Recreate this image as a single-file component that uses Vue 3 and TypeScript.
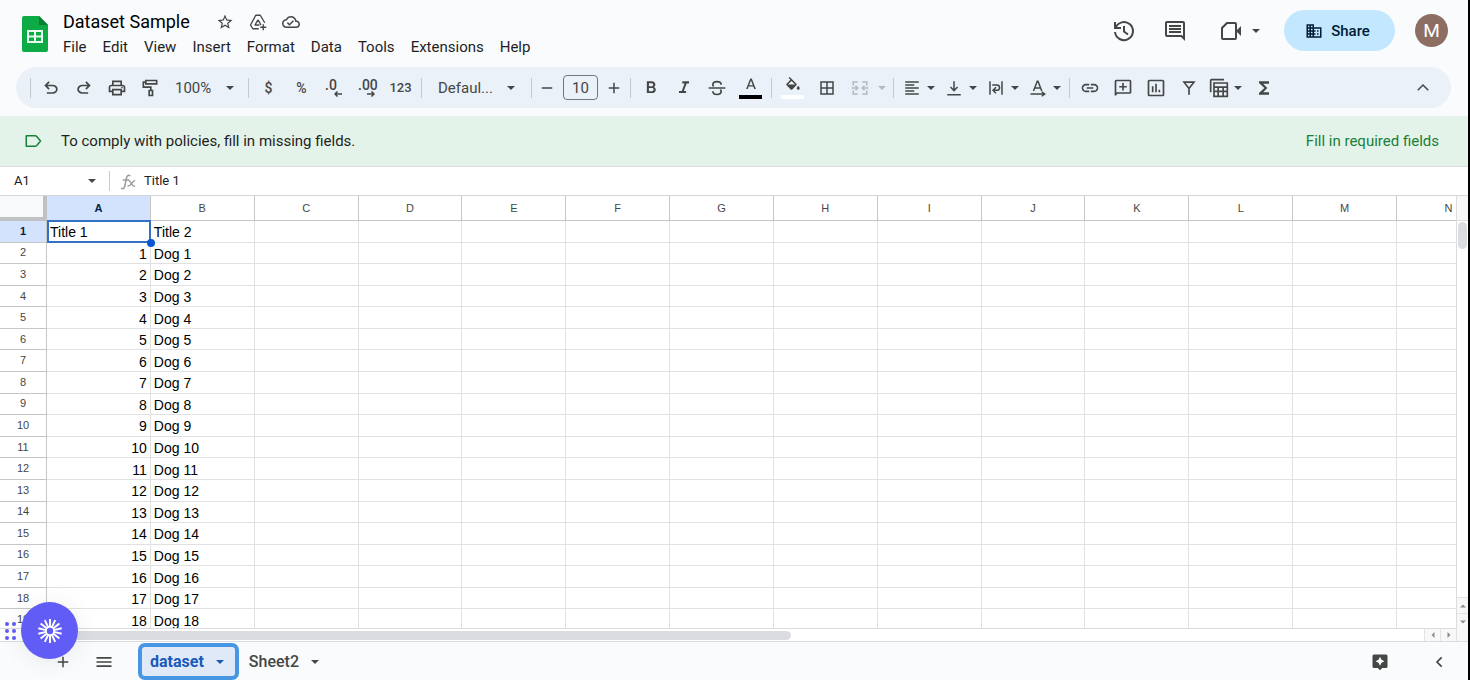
<script setup lang="ts">
import { ref } from 'vue'

interface Tool {
  icon: string
  label: string
  menu?: boolean
}

const title = ref('Dataset Sample')
const cellName = ref('A1')
const formula = ref('Title 1')
const fontSize = ref('10')

const menus = ['File', 'Edit', 'View', 'Insert', 'Format', 'Data', 'Tools', 'Extensions', 'Help']

const historyTools: Tool[] = [
  { icon: 'undo', label: 'Undo' },
  { icon: 'redo', label: 'Redo' },
  { icon: 'print', label: 'Print' },
  { icon: 'paint', label: 'Paint format' },
]
const alignTools: Tool[] = [
  { icon: 'align', label: 'Horizontal align', menu: true },
  { icon: 'valign', label: 'Vertical align', menu: true },
  { icon: 'wrap', label: 'Text wrapping', menu: true },
  { icon: 'rotate', label: 'Text rotation', menu: true },
]
const insertTools: Tool[] = [
  { icon: 'link', label: 'Insert link' },
  { icon: 'addcomment', label: 'Insert comment' },
  { icon: 'chart', label: 'Insert chart' },
  { icon: 'filter', label: 'Create a filter' },
  { icon: 'tables', label: 'Table views', menu: true },
  { icon: 'sigma', label: 'Functions' },
]

const columns = 'ABCDEFGHIJKLMN'.split('')
const rows: string[][] = [['Title 1', 'Title 2']]
for (let n = 1; n <= 18; n++) rows.push([String(n), `Dog ${n}`])
</script>

<template>
  <svg class="defs" aria-hidden="true">
    <symbol id="undo" viewBox="0 -960 960 960"><path d="M280-200v-80h284q63 0 109.5-40T720-420q0-60-46.5-100T564-560H312l104 104-56 56-200-200 200-200 56 56-104 104h252q97 0 169.5 63T800-420q0 94-72.5 157T564-200H280Z" /></symbol>
    <symbol id="redo" viewBox="0 -960 960 960"><path d="M396-200q-97 0-169.500-63T154-420q0-94 72.500-157T396-640h252L544-744l56-56 200 200-200 200-56-56 104-104H396q-63 0-109.500 40T240-420q0 60 46.500 100T396-280h284v80H396Z" /></symbol>
    <symbol id="print" viewBox="0 0 24 24"><path d="M19 8h-1V3H6v5H5c-1.660 0-3 1.340-3 3v6h4v4h12v-4h4v-6c0-1.660-1.340-3-3-3zM8 5h8v3H8V5zm8 14H8v-4h8v4zm2-4v-2H6v2H4v-4c0-.55.45-1 1-1h14c.55 0 1 .45 1 1v4h-2z" /><circle cx="18" cy="11.500" r="1" /></symbol>
    <symbol id="paint" viewBox="0 0 24 24"><g fill="none" stroke="currentColor" stroke-width="2"><path d="M7 3h13v4H7zM7 5H4v6h9v4" /><path d="M11 15h4v6h-4z" /></g></symbol>
    <symbol id="borders" viewBox="0 0 24 24"><path d="M3 3v18h18V3H3zm8 16H5v-6h6v6zm0-8H5V5h6v6zm8 8h-6v-6h6v6zm0-8h-6V5h6v6z" /></symbol>
    <symbol id="merge" viewBox="0 0 24 24"><g fill="none" stroke="currentColor" stroke-width="2"><path d="M9 4H3v5M3 15v5h6M15 4h6v5M21 15v5h-6M1 12h8M23 12h-8M6 9l3 3-3 3M18 9l-3 3 3 3" /></g></symbol>
    <symbol id="align" viewBox="0 0 24 24"><path d="M15 15H3v2h12v-2zm0-8H3v2h12V7zM3 13h18v-2H3v2zm0 8h18v-2H3v2zM3 3v2h18V3H3z" /></symbol>
    <symbol id="valign" viewBox="0 0 24 24"><path d="M11 3h2v10l3-3 1.400 1.400L12 17l-5.400-5.600L8 10l3 3zM3 20v2h18v-2z" /></symbol>
    <symbol id="wrap" viewBox="0 0 24 24"><g fill="none" stroke="currentColor" stroke-width="2"><path d="M4 3v18M20 3v18M7 8h6c5 0 5 7 0 7h-4M12 11l-4 4 4 4" /></g></symbol>
    <symbol id="rotate" viewBox="0 0 24 24"><g fill="none" stroke="currentColor" stroke-width="2"><path d="M6 16l5-13h1l5 13M8 12h7M2 20h18M17 17l4 3-4 3" /></g></symbol>
    <symbol id="link" viewBox="0 0 24 24"><path d="M3.900 12c0-1.710 1.390-3.100 3.100-3.100h4V7H7c-2.760 0-5 2.240-5 5s2.240 5 5 5h4v-1.900H7c-1.710 0-3.100-1.390-3.100-3.100zM8 13h8v-2H8v2zm9-6h-4v1.900h4c1.710 0 3.100 1.390 3.100 3.100s-1.390 3.100-3.100 3.100h-4V17h4c2.760 0 5-2.240 5-5s-2.240-5-5-5z" /></symbol>
    <symbol id="addcomment" viewBox="0 0 24 24"><g fill="none" stroke="currentColor" stroke-width="2"><path d="M3 21V4q0-1 1-1h16q1 0 1 1v13q0 1-1 1H5l-2 2M12 6v9M7.500 10.500h9" /></g></symbol>
    <symbol id="chart" viewBox="0 0 24 24"><g fill="none" stroke="currentColor" stroke-width="2"><rect x="3" y="3" width="18" height="18" rx="1" /><path d="M8 10v7M12 7v10M16 14v3" /></g></symbol>
    <symbol id="filter" viewBox="0 0 24 24"><path d="M4 4h16l-7 9v7h-2v-7zM8 6l4 5.200L16 6z" fill-rule="evenodd" /></symbol>
    <symbol id="tables" viewBox="0 0 24 24"><g fill="none" stroke="currentColor" stroke-width="2"><path d="M2 17V3q0-1 1-1h15M6 6h16v16H6zM6 11h16M6 16h16M11 12v9M17 12v9" /></g></symbol>
    <symbol id="sigma" viewBox="0 0 24 24"><path d="M18 4H6v2l6.500 6L6 18v2h12v-3h-7l5-5-5-5h7z" /></symbol>
    <symbol id="strike" viewBox="0 0 24 24"><g fill="none" stroke="currentColor" stroke-width="2"><path d="M2 12h20M17 8c0-5-10-5-10 0 0 1 0 1 1 2M7 16c0 5 10 5 10 0 0-1 0-1-1-2" /></g></symbol>
    <symbol id="bold" viewBox="0 0 24 24"><path d="M15.600 10.790c.97-.67 1.650-1.770 1.650-2.790 0-2.260-1.750-4-4-4H7v14h7.040c2.090 0 3.710-1.700 3.710-3.790 0-1.520-.86-2.820-2.150-3.420zM9.500 6.200h3.300c1 0 1.800.8 1.800 1.800s-.8 1.800-1.800 1.800H9.500V6.200zm3.800 9.600H9.500V12h3.800c1.050 0 1.900.85 1.900 1.900s-.85 1.900-1.900 1.900z" /></symbol>
    <symbol id="italic" viewBox="0 0 24 24"><path d="M10 4v2.500h2.700l-3.400 9H6V18h8.500v-2.500h-2.700l3.400-9H18V4z" /></symbol>
    <symbol id="textcolor" viewBox="0 0 24 24"><path d="M11 2 5.500 16h2.200l1.200-3.200h6.200l1.200 3.200h2.200L13 2h-2zm-1.400 9L12 4.600 14.400 11z" /></symbol>
    <symbol id="fill" viewBox="0 0 24 24"><path d="M16.560 8.940 7.620 0 6.210 1.410l2.380 2.380-5.150 5.150c-.59.59-.59 1.540 0 2.120l5.500 5.500c.29.290.68.440 1.060.440s.77-.15 1.060-.44l5.500-5.500c.59-.58.59-1.530 0-2.120zM5.210 10 10 5.210 14.790 10zM19 11.500s-2 2.170-2 3.500c0 1.100.9 2 2 2s2-.9 2-2c0-1.330-2-3.500-2-3.500z" /></symbol>
    <symbol id="caret" viewBox="0 0 10 5"><path d="M0 0h10L5 5z" /></symbol>
    <symbol id="star" viewBox="0 0 24 24"><path d="m22 9.240-7.190-.62L12 2 9.190 8.630 2 9.240l5.460 4.730L5.820 21 12 17.270 18.180 21l-1.630-7.030zM12 15.400l-3.760 2.270 1-4.280-3.320-2.880 4.380-.38L12 6.100l1.710 4.040 4.380.38-3.320 2.880 1 4.280z" /></symbol>
    <symbol id="drive" viewBox="0 0 24 24"><g fill="none" stroke="currentColor" stroke-width="1.800" stroke-linejoin="round"><path d="M13 21H5l-3-5L9 3h6l6 10M12 9l-4 7h6M12 9l4 7" /><path d="M19 15v8M15 19h8" /></g></symbol>
    <symbol id="cloud" viewBox="0 0 24 24"><path d="M19.350 10.040C18.670 6.590 15.640 4 12 4 9.110 4 6.600 5.640 5.350 8.040 2.340 8.360 0 10.910 0 14c0 3.310 2.690 6 6 6h13c2.760 0 5-2.240 5-5 0-2.640-2.050-4.780-4.650-4.960zM19 18H6c-2.210 0-4-1.790-4-4 0-2.050 1.530-3.760 3.560-3.970l1.070-.11.5-.95C8.080 7.140 9.940 6 12 6c2.620 0 4.880 1.860 5.390 4.430l.3 1.500 1.530.110c1.560.1 2.780 1.410 2.780 2.960 0 1.650-1.350 3-3 3zm-9-3.820-2.090-2.090L6.500 13.500 10 17l6.010-6.010-1.410-1.410z" /></symbol>
    <symbol id="history" viewBox="0 0 24 24"><g fill="none" stroke="currentColor" stroke-width="2"><path d="M3 3v6h6M3.500 9A9 9 0 1 1 3 13M12 7v5.500l4 3" /></g></symbol>
    <symbol id="comment" viewBox="0 0 24 24"><path d="M21.990 4c0-1.100-.89-2-1.990-2H4c-1.100 0-2 .9-2 2v12c0 1.100.9 2 2 2h14l4 4-.01-18zM20 4v13.170L18.830 16H4V4h16zM6 12h12v2H6zm0-3h12v2H6zm0-3h12v2H6z" /></symbol>
    <symbol id="video" viewBox="0 0 24 24"><path d="M8 4 3 9v10q0 1 1 1h12q1 0 1-1V5q0-1-1-1z" fill="none" stroke="currentColor" stroke-width="2" /><path d="m17 12 5-5v10z" /></symbol>
    <symbol id="org" viewBox="0 0 24 24"><path d="M12 7V3H2v18h20V7H12zM6 19H4v-2h2v2zm0-4H4v-2h2v2zm0-4H4V9h2v2zm0-4H4V5h2v2zm4 12H8v-2h2v2zm0-4H8v-2h2v2zm0-4H8V9h2v2zm0-4H8V5h2v2zm10 12h-8v-2h2v-2h-2v-2h2v-2h-2V9h8v10zm-2-8h-2v2h2v-2zm0 4h-2v2h2v-2z" /></symbol>
    <symbol id="chevron" viewBox="0 0 24 24"><path d="m5 15 7-7 7 7" fill="none" stroke="currentColor" stroke-width="2" /></symbol>
    <symbol id="chevron-left" viewBox="0 0 24 24"><path d="m16 5-7 7 7 7" fill="none" stroke="currentColor" stroke-width="2.500" /></symbol>
    <symbol id="minus" viewBox="0 0 24 24"><path d="M5 11h14v2H5z" /></symbol>
    <symbol id="plus" viewBox="0 0 24 24"><path d="M5 11h6V5h2v6h6v2h-6v6h-2v-6H5z" /></symbol>
    <symbol id="lines" viewBox="0 0 24 24"><path d="M3 6h18v2H3zM3 11h18v2H3zM3 16h18v2H3z" /></symbol>
    <symbol id="explore" viewBox="0 0 24 24"><path d="M4 2h16q2 0 2 2v14q0 2-2 2h-5l-3 3-3-3H4q-2 0-2-2V4q0-2 2-2zm8 3-2 4-4 2 4 2 2 4 2-4 4-2-4-2z" /></symbol>
    <symbol id="tag" viewBox="0 0 24 24"><path d="M3 5h12q1 0 2 1l5 6-5 6q-1 1-2 1H3z" fill="none" stroke="currentColor" stroke-width="2" stroke-linejoin="round" /></symbol>
    <symbol id="fx" viewBox="0 0 18 18"><g fill="none" stroke="currentColor" stroke-width="1.600"><path d="M11 3C8 1 7 4 6.500 7L5 14c-.5 3-2 3-4 2M3 7.500h7M9 8c3 0 3 7 7 6M16 8c-3 0-4 6-8 6" /></g></symbol>
    <symbol id="burst" viewBox="0 0 24 24"><g stroke="currentColor" stroke-width="2"><path v-for="n in 14" :key="n" d="M12 0v8" :transform="`rotate(${(n - 1) * 360 / 14} 12 12)`" /></g><circle cx="12" cy="12" r="4" fill="none" stroke="currentColor" stroke-width="1.600" /></symbol>
  </svg>

  <div class="app">
    <header class="header">
      <svg class="logo" viewBox="0 0 26 36" aria-hidden="true">
        <path d="M2 0h15l9 9v25q0 2-2 2H2q-2 0-2-2V2q0-2 2-2z" fill="#0cab46" />
        <path d="M17 0l9 9h-9z" fill="#087f31" />
        <path d="M5 14h16v13H5zm2 2v3.500h5V16zm7 0v3.500h5V16zm-7 5.500V25h5v-3.500zm7 0V25h5v-3.500z" fill="#e9faef" fill-rule="evenodd" />
      </svg>
      <div class="heading">
        <div class="title-row">
          <input v-model="title" class="title" aria-label="Document title">
          <button class="plain" aria-label="Star"><svg class="i18"><use href="#star" /></svg></button>
          <button class="plain" aria-label="Move"><svg class="i18"><use href="#drive" /></svg></button>
          <button class="plain" aria-label="Document status"><svg class="i18"><use href="#cloud" /></svg></button>
        </div>
        <nav class="menus">
          <button v-for="m in menus" :key="m" class="menu">{{ m }}</button>
        </nav>
      </div>
      <div class="actions">
        <button class="plain" aria-label="Version history"><svg class="i24"><use href="#history" /></svg></button>
        <button class="plain" aria-label="Comments"><svg class="i24"><use href="#comment" /></svg></button>
        <button class="plain meet" aria-label="Start a call"><svg class="i24"><use href="#video" /></svg><svg class="caret"><use href="#caret" /></svg></button>
        <button class="share"><svg class="i18"><use href="#org" /></svg>Share</button>
        <button class="avatar" aria-label="Account">M</button>
      </div>
    </header>

    <div class="toolbar" role="toolbar">
      <span class="divider" />
      <button v-for="t in historyTools" :key="t.icon" class="tool" :aria-label="t.label"><svg class="i20"><use :href="'#' + t.icon" /></svg></button>
      <label class="picker zoom">
        <select aria-label="Zoom"><option>100%</option></select>
        <svg class="caret"><use href="#caret" /></svg>
      </label>
      <span class="divider" />
      <div class="group numbers">
        <button class="tool symbol" aria-label="Format as currency">$</button>
        <button class="tool symbol" aria-label="Format as percent">%</button>
        <button class="tool decimal" aria-label="Decrease decimal places"><span>.0</span><svg viewBox="0 0 8 6"><path d="M8 3H1M3.500.5 1 3l2.500 2.500" /></svg></button>
        <button class="tool decimal" aria-label="Increase decimal places"><span>.00</span><svg viewBox="0 0 8 6"><path d="M0 3h7M4.500.5 7 3 4.500 5.500" /></svg></button>
        <button class="tool digits" aria-label="More formats">123</button>
      </div>
      <span class="divider" />
      <label class="picker font">
        <select aria-label="Font"><option>Defaul...</option></select>
        <svg class="caret"><use href="#caret" /></svg>
      </label>
      <span class="divider" />
      <div class="stepper">
        <button class="step" aria-label="Decrease font size"><svg class="i18"><use href="#minus" /></svg></button>
        <input v-model="fontSize" class="size" aria-label="Font size">
        <button class="step" aria-label="Increase font size"><svg class="i18"><use href="#plus" /></svg></button>
      </div>
      <span class="divider" />
      <button class="tool" aria-label="Bold"><svg class="i20"><use href="#bold" /></svg></button>
      <button class="tool" aria-label="Italic"><svg class="i20"><use href="#italic" /></svg></button>
      <button class="tool" aria-label="Strikethrough"><svg class="i20"><use href="#strike" /></svg></button>
      <button class="tool swatch black" aria-label="Text color"><svg class="i18"><use href="#textcolor" /></svg></button>
      <span class="divider" />
      <button class="tool swatch white" aria-label="Fill color"><svg class="i18"><use href="#fill" /></svg></button>
      <button class="tool" aria-label="Borders"><svg class="i18"><use href="#borders" /></svg></button>
      <button class="tool merge" aria-label="Merge cells" disabled><svg class="i18"><use href="#merge" /></svg><svg class="caret"><use href="#caret" /></svg></button>
      <span class="divider" />
      <div class="group aligns">
        <button v-for="t in alignTools" :key="t.icon" class="tool paired" :aria-label="t.label"><span><svg class="i18"><use :href="'#' + t.icon" /></svg></span><svg class="caret"><use href="#caret" /></svg></button>
      </div>
      <span class="divider" />
      <button v-for="t in insertTools" :key="t.icon" class="tool" :class="{ paired: t.menu }" :aria-label="t.label"><span><svg class="i20"><use :href="'#' + t.icon" /></svg></span><svg v-if="t.menu" class="caret"><use href="#caret" /></svg></button>
      <button class="tool collapse" aria-label="Hide the menus"><svg class="i18"><use href="#chevron" /></svg></button>
    </div>

    <section class="banner">
      <svg class="i18"><use href="#tag" /></svg>
      <span>To comply with policies, fill in missing fields.</span>
      <a href="#required">Fill in required fields</a>
    </section>

    <div class="formula-bar">
      <input v-model="cellName" class="name-box" aria-label="Name box">
      <button class="plain name-menu" aria-label="Named ranges"><svg class="caret"><use href="#caret" /></svg></button>
      <span class="divider" />
      <svg class="fx"><use href="#fx" /></svg>
      <input v-model="formula" class="formula" aria-label="Formula">
    </div>

    <main class="sheet">
      <div class="grid">
        <table>
          <colgroup><col class="row-col"><col v-for="c in columns" :key="c"></colgroup>
          <thead>
            <tr><th class="corner" /><th v-for="c in columns" :key="c" scope="col" :class="{ active: c === 'A' }">{{ c }}</th></tr>
          </thead>
          <tbody>
            <tr v-for="(row, r) in rows" :key="r">
              <th scope="row" :class="{ active: r === 0 }">{{ r + 1 }}</th>
              <td v-for="(c, k) in columns" :key="c" :class="{ number: k === 0 && r > 0, selected: k === 0 && r === 0 }">{{ row[k] }}</td>
            </tr>
          </tbody>
        </table>
      </div>
      <div class="vscroll">
        <div class="vhead" />
        <div class="vtrack"><div class="vthumb" /></div>
        <button class="arrow" aria-label="Scroll up"><svg class="up"><use href="#caret" /></svg></button>
        <button class="arrow" aria-label="Scroll down"><svg><use href="#caret" /></svg></button>
      </div>
      <div class="hscroll">
        <div class="htrack"><div class="hthumb" /></div>
        <button class="arrow" aria-label="Scroll left"><svg class="left"><use href="#caret" /></svg></button>
        <button class="arrow" aria-label="Scroll right"><svg class="right"><use href="#caret" /></svg></button>
      </div>
      <div class="scroll-corner" />
    </main>

    <footer class="tabs">
      <button class="plain add" aria-label="Add sheet"><svg class="i18"><use href="#plus" /></svg></button>
      <button class="plain all" aria-label="All sheets"><svg class="i20"><use href="#lines" /></svg></button>
      <button class="tab current">dataset<svg class="caret"><use href="#caret" /></svg></button>
      <button class="tab">Sheet2<svg class="caret"><use href="#caret" /></svg></button>
      <button class="plain explore" aria-label="Explore"><svg class="i18"><use href="#explore" /></svg></button>
      <button class="plain side" aria-label="Show side panel"><svg class="i16"><use href="#chevron-left" /></svg></button>
    </footer>

    <div class="floating">
      <span class="grip"><i v-for="n in 6" :key="n" /></span>
      <button class="bubble" aria-label="Open recorder"><svg class="i24"><use href="#burst" /></svg></button>
    </div>
  </div>
</template>

<style>
body { margin: 0; }
</style>

<style scoped>
.defs { position: absolute; width: 0; height: 0; }
.app {
  box-sizing: border-box;
  position: relative;
  display: flex;
  flex-direction: column;
  height: 100vh;
  overflow: hidden;
  border-right: 2px solid #000;
  background: #f9fbfd;
  color: #1f1f1f;
  font-family: Roboto, "Liberation Sans", sans-serif;
}
svg { display: block; flex: none; fill: currentColor; }
button, input, select {
  box-sizing: border-box;
  margin: 0;
  padding: 0;
  border: 0;
  background: none;
  color: inherit;
  font: inherit;
  outline: none;
}
select { appearance: none; }
.i16 { width: 16px; height: 16px; }
.i18 { width: 18px; height: 18px; }
.i20 { width: 20px; height: 20px; }
.i24 { width: 24px; height: 24px; }
.caret { width: 8px; height: 4px; }
.plain { display: flex; align-items: center; justify-content: center; color: #444746; }
.divider { flex: none; width: 1px; height: 20px; margin: 0 3px; background: #c7c9cc; }

.header { display: flex; height: 67px; flex: none; }
.logo { width: 26px; height: 36px; margin: 16px 15px 0 22px; }
.heading { padding-top: 9px; }
.title-row { display: flex; align-items: center; gap: 15px; height: 26px; }
.title { width: 138px; height: 24px; margin-bottom: 2px; font-size: 18px; color: #000; }
.menus { display: flex; gap: 16px; margin-top: 2px; }
.menu { height: 20px; font-size: 15px; }
.actions { display: flex; align-items: center; height: 41px; margin: 10px 20px 0 auto; }
.actions .plain { margin-right: 27px; }
.actions .plain.meet { gap: 9px; margin: 0 24px 0 5px; }
.share { display: flex; align-items: center; justify-content: center; gap: 8px; width: 111px; height: 41px; padding-right: 4px; border-radius: 21px; background: #c2e7ff; color: #001d35; font-size: 15px; font-weight: 500; }
.avatar { width: 33px; height: 33px; margin-left: 20px; border-radius: 50%; background: #8d6e63; color: #fff; font-size: 19px; }

.toolbar { display: flex; align-items: center; flex: none; height: 41px; margin: 0 17px 8px 16px; padding: 0 12px 0 11px; border-radius: 21px; background: #ebf1f9; color: #444746; }
.tool { display: flex; align-items: center; justify-content: center; flex: none; width: 33px; height: 32px; }
.group { display: flex; flex: none; }
.picker { display: grid; align-items: center; flex: none; }
.picker select, .picker svg { grid-area: 1 / 1; }
.picker svg { justify-self: end; margin-right: 11px; pointer-events: none; }
.picker select { width: 100%; padding-left: 9px; font-size: 15px; }
.zoom { width: 79px; }
.font { width: 103px; }
.font select { padding-left: 13px; }
.font svg { margin-right: 13px; }
.numbers { padding-right: 1px; }
.symbol { font-size: 14px; font-weight: 500; }
.digits { font-size: 13px; font-weight: 500; }
.decimal { flex-direction: column; align-items: flex-start; padding-left: 7px; font-size: 14px; font-weight: 500; line-height: 12px; }
.decimal svg { width: 8px; height: 6px; margin-left: 9px; fill: none; stroke: currentColor; stroke-width: 1.5; }
.stepper { display: flex; align-items: center; gap: 4px; padding-right: 1px; }
.step { display: flex; align-items: center; justify-content: center; width: 24px; height: 24px; }
.size { width: 35px; height: 25px; border: 1px solid #747775; border-radius: 4px; font-size: 15px; text-align: center; }
.swatch { flex-direction: column; width: 35px; }
.swatch::after { width: 23px; height: 4px; content: ""; background: #000; }
.white::after { background: #fff; }
.merge { gap: 9px; width: 47px; padding-left: 4px; color: #b5b8bc; }
.aligns { padding-left: 1px; }
.paired { justify-content: flex-start; gap: 1px; width: 42px; }
.paired span { display: flex; justify-content: center; width: 28px; }
.collapse { margin-left: auto; }

.banner { display: flex; align-items: center; flex: none; height: 50px; padding: 0 29px 0 24px; border-bottom: 1px solid #d9dcdf; background: #e4f3e9; font-size: 15px; }
.banner svg { margin-right: 19px; color: #188038; }
.banner a { margin-left: auto; color: #188038; text-decoration: none; }

.formula-bar { display: flex; align-items: center; flex: none; height: 28px; border-bottom: 1px solid #d5d7da; background: #fff; font-size: 13px; color: #202124; }
.name-box { width: 74px; margin-left: 14px; }
.name-menu { width: 8px; margin-right: 10px; }
.fx { width: 17px; height: 17px; margin: 0 7px; color: #9a9da1; }
.name-box, .formula { height: 24px; padding-bottom: 2px; }
.formula { flex: 1; }

.sheet { display: grid; grid-template: minmax(0, 1fr) 13px / minmax(0, 1fr) 12px; flex: 1; min-height: 0; background: #fff; }
.grid { overflow: hidden; border-bottom: 1px solid #dadce0; }
table { table-layout: fixed; width: 1501px; height: 435px; border-spacing: 0; font-family: "Liberation Sans", Arial, sans-serif; }
.row-col { width: 47px; }
th, td { box-sizing: border-box; padding: 0; line-height: 16px; }
th { border-right: 1px solid #c4c7c5; border-bottom: 1px solid #c4c7c5; color: #444746; font-size: 11px; font-weight: 400; }
thead th { height: 25px; }
tbody th { padding-bottom: 1px; }
th.active { background: #d3e3fd; color: #041e49; font-weight: 700; }
.corner { border: solid #bfc1c3; border-width: 0 4px 4px 0; background: #f8f9fa; }
td { position: relative; padding: 2px 3px 0; border-right: 1px solid #e1e1e1; border-bottom: 1px solid #e1e1e1; color: #000; font-size: 14px; white-space: nowrap; }
.number { text-align: right; }
.selected::before { position: absolute; inset: -1px -1px -1px 0; border: 2px solid #3271c4; content: ""; }
.selected::after { position: absolute; right: -5px; bottom: -5px; z-index: 1; width: 8px; height: 8px; border-radius: 50%; background: #0b57d0; content: ""; }

.vscroll { display: flex; flex-direction: column; box-sizing: border-box; border-left: 1px solid #dadce0; }
.vhead { height: 24px; border-bottom: 1px solid #dadce0; background: #f8f8f8; }
.vtrack { flex: 1; padding-top: 1px; }
.vthumb { width: 9px; height: 27px; margin: 0 auto; border-radius: 5px; background: #dadce0; }
.arrow { display: flex; align-items: center; justify-content: center; flex: none; height: 16px; border: solid #e1e3e5; border-width: 1px 0 0; background: #f8f8f8; color: #8a8d91; }
.arrow svg { width: 6px; height: 4px; }
.up { transform: rotate(180deg); }
.left { transform: rotate(90deg); }
.right { transform: rotate(-90deg); }
.hscroll { display: flex; border-bottom: 1px solid #dadce0; }
.htrack { display: flex; align-items: center; flex: 1; padding-left: 47px; }
.hthumb { width: 54%; height: 9px; border-radius: 5px; background: #dadce0; }
.hscroll .arrow { width: 16px; height: auto; border-width: 0 0 0 1px; }
.scroll-corner { border-bottom: 1px solid #dadce0; border-left: 1px solid #e1e3e5; background: #f8f8f8; }

.tabs { display: flex; align-items: center; box-sizing: border-box; flex: none; height: 38px; padding: 1px 0 0 54px; color: #444746; }
.all { margin: 0 24px 0 22px; }
.tab { display: flex; align-items: center; gap: 12px; height: 37px; font-size: 16px; font-weight: 500; }
.current { margin-right: 10px; padding: 0 11px 0 8px; border: 4px solid #4796e3; border-radius: 7px; background: #e0e9f7; color: #185abc; font-weight: 700; }
.explore { margin: 0 42px 0 auto; }
.side { margin-right: 21px; }

.floating { position: absolute; bottom: 21px; left: 5px; display: flex; align-items: center; gap: 5px; }
.grip { display: grid; grid-template-columns: 4px 4px; gap: 3px; }
.grip i { width: 4px; height: 4px; border-radius: 50%; background: #615cf5; }
.bubble { display: flex; align-items: center; justify-content: center; width: 57px; height: 57px; border-radius: 50%; background: #615cf5; box-shadow: 0 2px 24px #00000014; color: #fff; }
</style>
